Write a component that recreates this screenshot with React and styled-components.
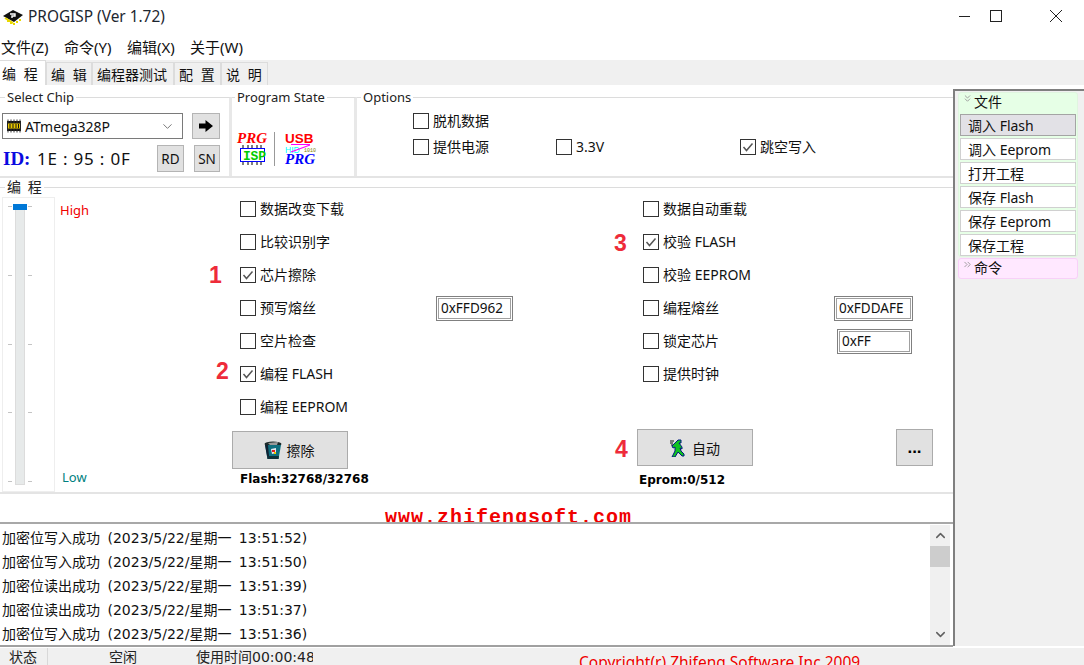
import React from "react";
import styled, { createGlobalStyle } from "styled-components";
import { ChevronDown, ChevronUp, ChevronsDown, ChevronsRight } from "lucide-react";

const Global = createGlobalStyle`
  html, body {
    margin: 0;
    padding: 0;
    background: #fff;
  }
  * {
    box-sizing: border-box;
  }
`;

const UI_FONT = `"Noto Sans", "Noto Sans CJK SC", sans-serif`;
const WIDE_FONT = `"DejaVu Sans", "Noto Sans CJK SC", sans-serif`;

function AppIcon() {
  return (
    <svg width="22" height="18" viewBox="0 0 22 18">
      <path d="M1 9 L11 3 L21 8 L12 15 Z" fill="#111" />
      <path d="M3 11 L11 16 M6 13 L6 15 M9 15 L9 17 M12 16 L12 18 M15 14 L15 16 M18 12 L18 14" stroke="#e8d800" strokeWidth="2" />
      <path d="M8 7 h5 v2 h-3 v2" stroke="#fff" strokeWidth="1.4" fill="none" />
    </svg>
  );
}

function WinControl({ kind }) {
  return (
    <svg width="14" height="14" viewBox="0 0 14 14" stroke="#222" strokeWidth="1" fill="none">
      {kind === "min" && <path d="M1 7.5 H12" />}
      {kind === "max" && <rect x="1.5" y="1.5" width="11" height="11" />}
      {kind === "close" && <path d="M1 1 L13 13 M13 1 L1 13" />}
    </svg>
  );
}

function ChipIcon() {
  return (
    <svg width="16" height="14" viewBox="0 0 16 14">
      <rect x="1" y="2" width="14" height="10" fill="#111" />
      <path d="M2 0.5 V13.5 M5 0.5 V13.5 M8 0.5 V13.5 M11 0.5 V13.5 M14 0.5 V13.5" stroke="#333" strokeWidth="1" />
      <rect x="2" y="4.5" width="12" height="5" fill="#e8c800" />
      <path d="M4 5 V9 M7 5 V9 M10 5 V9 M12.5 5 V9" stroke="#111" strokeWidth="1" />
    </svg>
  );
}

function ArrowIcon() {
  return (
    <svg width="14" height="12" viewBox="0 0 14 12">
      <path d="M0 3.5 H6.5 V0 L14 6 L6.5 12 V8.5 H0 Z" fill="#000" />
    </svg>
  );
}

function StateLogo() {
  return (
    <svg width="92" height="38" viewBox="0 0 92 38">
      <text x="3" y="12" fontFamily="Liberation Serif" fontWeight="700" fontStyle="italic" fontSize="15" fill="#f00">PRG</text>
      <path d="M9 14 V34 M14 14 V34 M18 14 V34 M23 14 V34 M27 14 V34" stroke="#000" strokeWidth="1" />
      <rect x="6.5" y="17.5" width="24" height="13" fill="#fff" stroke="#00f" strokeWidth="1" />
      <text x="9" y="29" fontFamily="Liberation Mono" fontWeight="700" fontSize="13" fill="#0c0" letterSpacing="-0.2">ISP</text>
      <path d="M40.5 1 V35" stroke="#999" strokeWidth="1" />
      <text x="51" y="12" fontFamily="Liberation Sans" fontWeight="700" fontSize="13.5" fill="#f00">USB</text>
      <text x="51" y="22" fontFamily="Liberation Sans" fontSize="8.5" fill="#0ff">HID</text>
      <path d="M57 21 L76 14 M57 13.5 H76" stroke="#f0f" strokeWidth="1.2" />
      <text x="70" y="21" fontFamily="Liberation Mono" fontSize="5" fill="#808000">1010</text>
      <text x="51" y="33" fontFamily="Liberation Serif" fontWeight="700" fontStyle="italic" fontSize="15" fill="#00f">PRG</text>
    </svg>
  );
}

function TrashIcon() {
  return (
    <svg width="20" height="20" viewBox="0 0 20 20">
      <ellipse cx="10" cy="4" rx="8.5" ry="2.6" fill="#1b2a2a" />
      <path d="M5 3 L15 2 L14 5 L7 5 Z" fill="#999" />
      <path d="M2 5 L18 5 L15.5 19 L4.5 19 Z" fill="#0f6f7f" />
      <path d="M4.5 19 L15.5 19 L16 16 L4 16 Z" fill="#10303a" />
      <path d="M2 5 L5 5 L6 16 L4 16 Z" fill="#123" />
      <path d="M8 9 L13 8 L13 13 L9 14 Z" fill="#e8e8f0" />
      <rect x="9" y="10" width="3" height="2" fill="#e02020" />
      <rect x="11" y="12" width="2" height="2" fill="#e8c800" />
    </svg>
  );
}

function RunnerIcon() {
  return (
    <svg width="17" height="19" viewBox="0 0 17 19">
      <path d="M0 3 H4 M0 5 H3 M1 7 H4" stroke="#111" strokeWidth="1" />
      <path d="M8 2 h3 v3 h-2 l3 4 v2 l-2 -1 l1 3 l3 3 v2 h-2 l-4 -4 l-3 5 h-3 l3 -6 v-4 l-2 1 l-1 -2 z" fill="#10c020" stroke="#001a80" strokeWidth="1" strokeLinejoin="round" />
    </svg>
  );
}

function CheckBox({ checked }) {
  return (
    <Box>
      {checked && (
        <svg width="14" height="14" viewBox="0 0 14 14">
          <path d="M2.5 7 L5.5 10.5 L11.5 3.5" stroke="#555" strokeWidth="1.5" fill="none" />
        </svg>
      )}
    </Box>
  );
}

function Check({ checked, label }) {
  return (
    <CheckLabel>
      <CheckBox checked={checked} />
      <span>{label}</span>
    </CheckLabel>
  );
}

const leftRows = [
  { label: "数据改变下载" },
  { label: "比较识别字" },
  { label: "芯片擦除", checked: true, mark: "1", left: -31, top: 0 },
  { label: "预写熔丝", fuse: "0xFFD962", $w: 196, fuseW: 77 },
  { label: "空片检查" },
  { label: "编程 FLASH", checked: true, mark: "2", left: -24, top: -3 },
  { label: "编程 EEPROM" },
];

const rightRows = [
  { label: "数据自动重载" },
  { label: "校验 FLASH", checked: true, mark: "3", left: -29, top: 1 },
  { label: "校验 EEPROM" },
  { label: "编程熔丝", fuse: "0xFDDAFE", $w: 191, fuseW: 79 },
  { label: "锁定芯片", fuse: "0xFF", $w: 194, fuseW: 75 },
  { label: "提供时钟" },
];

const logLines = [
  "加密位写入成功 (2023/5/22/星期一 13:51:52)",
  "加密位写入成功 (2023/5/22/星期一 13:51:50)",
  "加密位读出成功 (2023/5/22/星期一 13:51:39)",
  "加密位读出成功 (2023/5/22/星期一 13:51:37)",
  "加密位写入成功 (2023/5/22/星期一 13:51:36)",
];

const fileItems = ["调入 Flash", "调入 Eeprom", "打开工程", "保存 Flash", "保存 Eeprom", "保存工程"];
const tabs = [
  { text: "编 程", w: 46 },
  { text: "编 辑", w: 46 },
  { text: "编程器测试", w: 82 },
  { text: "配 置", w: 47 },
  { text: "说 明", w: 47 },
];
const menus = ["文件(Z)", "命令(Y)", "编辑(X)", "关于(W)"];

function OptionRows({ rows, indent }) {
  return rows.map((r) => (
    <CheckRow key={r.label} $w={r.$w} $indent={indent}>
      {r.mark && (
        <Mark $left={r.left} $top={r.top}>
          {r.mark}
        </Mark>
      )}
      <Check checked={r.checked} label={r.label} />
      {r.fuse && <Fuse $w={r.fuseW}>{r.fuse}</Fuse>}
    </CheckRow>
  ));
}

export default function App() {
  return (
    <Page>
      <Global />
      <TitleBar>
        <AppIcon />
        <Title>PROGISP (Ver 1.72)</Title>
        <Controls>
          <WinControl kind="min" />
          <WinControl kind="max" />
          <CloseSlot>
            <WinControl kind="close" />
          </CloseSlot>
        </Controls>
      </TitleBar>

      <MenuBar>
        {menus.map((m) => (
          <MenuItem key={m}>{m}</MenuItem>
        ))}
      </MenuBar>

      <TabStrip>
        {tabs.map((t, i) => (
          <Tab key={t.text} $w={t.w} $active={i === 0}>
            {t.text}
          </Tab>
        ))}
      </TabStrip>

      <Body>
        <Main>
          <TopRow>
            <ChipGroup>
              <Legend>Select Chip</Legend>
              <ChipLine>
                <ChipSelect>
                  <ChipIcon />
                  <ChipName>ATmega328P</ChipName>
                  <ChevronDown size={15} color="#666" strokeWidth={1.4} />
                </ChipSelect>
                <SmallButton $w={28} $h={26}>
                  <ArrowIcon />
                </SmallButton>
              </ChipLine>
              <IdLine>
                <IdTag>ID:</IdTag>
                <IdValue>1E : 95 : 0F</IdValue>
                <SmallButton $w={27} $h={27}>RD</SmallButton>
                <SmallButton $w={26} $h={27}>SN</SmallButton>
              </IdLine>
            </ChipGroup>

            <StateGroup>
              <Legend $x={3}>Program State</Legend>
              <LogoSlot>
                <StateLogo />
              </LogoSlot>
            </StateGroup>

            <OptionsGroup>
              <Legend $x={4}>Options</Legend>
              <OptionsGrid>
                <Check label="脱机数据" />
                <span />
                <span />
                <Check label="提供电源" />
                <Check label="3.3V" />
                <Check checked label="跳空写入" />
              </OptionsGrid>
            </OptionsGroup>
          </TopRow>

          <ProgramGroup>
            <ProgramLegend>编 程</ProgramLegend>
            <ProgramBody>
              <SliderBox>
                <Track>
                  <Thumb />
                </Track>
                <Ticks>
                  {[0, 1, 2, 3, 4].map((n) => (
                    <TickRow key={n}>
                      <Tick />
                      <Tick />
                    </TickRow>
                  ))}
                </Ticks>
              </SliderBox>

              <Levels>
                <High>High</High>
                <Low>Low</Low>
              </Levels>

              <LeftColumn>
                <OptionRows rows={leftRows} indent={8} />
                <EraseButton>
                  <TrashIcon />
                  擦除
                </EraseButton>
                <Counter>Flash:32768/32768</Counter>
              </LeftColumn>

              <RightColumn>
                <CheckArea>
                  <OptionRows rows={rightRows} indent={6} />
                </CheckArea>
                <ActionRow>
                  <AutoButton>
                    <AutoMark>4</AutoMark>
                    <RunnerIcon />
                    自动
                  </AutoButton>
                  <MoreButton>...</MoreButton>
                </ActionRow>
                <EpromCounter>Eprom:0/512</EpromCounter>
              </RightColumn>
            </ProgramBody>
          </ProgramGroup>

          <Banner>www.zhifengsoft.com</Banner>

          <LogPane>
            <LogList>
              {logLines.map((l, i) => (
                <LogLine key={i}>{l}</LogLine>
              ))}
            </LogList>
            <ScrollTrack>
              <ScrollEnd>
                <ChevronUp size={15} color="#606060" strokeWidth={2.4} />
              </ScrollEnd>
              <ScrollThumb />
              <ScrollFill />
              <ScrollEnd>
                <ChevronDown size={15} color="#606060" strokeWidth={2.4} />
              </ScrollEnd>
            </ScrollTrack>
          </LogPane>
        </Main>

        <Sidebar>
          <SideGroup $bg="#e6ffe6" $line="#e0f5e0">
            <SideHead>
              <ChevronsDown size={11} color="#999" strokeWidth={2} />
              文件
            </SideHead>
            {fileItems.map((f, i) => (
              <SideItem key={f} $selected={i === 0}>
                {f}
              </SideItem>
            ))}
          </SideGroup>
          <SideGroup $bg="#ffe8ff" $line="#f8d0f8">
            <SideHead>
              <ChevronsRight size={11} color="#999" strokeWidth={2} />
              命令
            </SideHead>
          </SideGroup>
        </Sidebar>
      </Body>

      <StatusBar>
        <StatusCell $w={48} $pad={9} $line>状态</StatusCell>
        <StatusCell $w={148} $pad={61}>空闲</StatusCell>
        <TimeCell $w={117} $pad={0}>使用时间00:00:48</TimeCell>
        <Copyright>Copyright(r) Zhifeng Software Inc 2009</Copyright>
      </StatusBar>
    </Page>
  );
}

const Page = styled.div`
  width: 1084px;
  height: 665px;
  overflow: hidden;
  display: flex;
  flex-direction: column;
  background: #fff;
  color: #111;
  font-family: ${UI_FONT};
  font-size: 14px;
`;

const TitleBar = styled.div`
  height: 32px;
  flex: none;
  display: flex;
  align-items: center;
  padding-left: 2px;
`;

const Title = styled.div`
  margin-left: 4px;
  font-size: 15.4px;
  color: #1c2630;
`;

const Controls = styled.div`
  margin-left: auto;
  margin-right: 21px;
  display: flex;
  align-items: center;
  gap: 17px;
`;

const CloseSlot = styled.div`
  margin-left: 29px;
  display: flex;
`;

const MenuBar = styled.div`
  height: 28px;
  flex: none;
  display: flex;
  align-items: center;
  padding-left: 1px;
  gap: 14px;
`;

const MenuItem = styled.div`
  width: 49px;
  white-space: nowrap;
  font-size: 15px;
`;

const TabStrip = styled.div`
  height: 25px;
  flex: none;
  display: flex;
  align-items: flex-end;
  background: #f0f0f0;
`;

const Tab = styled.div`
  width: ${(p) => p.$w}px;
  height: ${(p) => (p.$active ? 25 : 23)}px;
  padding-left: ${(p) => (p.$active ? 2 : 4)}px;
  display: flex;
  align-items: center;
  font-size: 14px;
  word-spacing: 4px;
  white-space: nowrap;
  background: ${(p) => (p.$active ? "#fff" : "#f0f0f0")};
  border: 1px solid #dcdcdc;
  border-bottom: none;
  border-left: ${(p) => (p.$active ? "none" : "1px solid #dcdcdc")};
`;

const Body = styled.div`
  height: 562px;
  flex: none;
  display: flex;
`;

const Main = styled.div`
  width: 953px;
  flex: none;
  display: flex;
  flex-direction: column;
  border-bottom: 2px solid #a0a0a0;
  padding-top: 3px;
`;

const Group = styled.fieldset`
  margin: 0;
  padding: 0;
  min-width: 0;
  border: none;
  border-top: 1px solid #dcdcdc;
`;

const Legend = styled.legend`
  margin-left: ${(p) => p.$x ?? 5}px;
  padding: 0 2px;
  height: 18px;
  line-height: 18px;
  font-size: 13px;
  color: #222;
`;

const ProgramLegend = styled(Legend)`
  font-size: 14px;
  word-spacing: 3px;
`;

const TopRow = styled.div`
  height: 90px;
  flex: none;
  display: flex;
  border-bottom: 2px solid #e4e4e4;
`;

const ChipGroup = styled(Group)`
  width: 232px;
  flex: none;
  border-right: 3px solid #e8e8e8;
`;

const ChipLine = styled.div`
  margin-top: 7px;
  padding-left: 2px;
  display: flex;
  gap: 9px;
  align-items: center;
`;

const ChipSelect = styled.div`
  width: 181px;
  height: 26px;
  border: 1px solid #7a7a7a;
  display: flex;
  align-items: center;
  gap: 3px;
  padding: 0 7px 0 3px;
  background: #fff;
`;

const ChipName = styled.span`
  flex: 1;
  font-size: 14px;
`;

const SmallButton = styled.div`
  width: ${(p) => p.$w}px;
  height: ${(p) => p.$h}px;
  flex: none;
  border: 1px solid #b4b4b4;
  background: #e1e1e1;
  display: flex;
  align-items: center;
  justify-content: center;
  font-size: 13.5px;
  color: #111;
`;

const IdLine = styled.div`
  margin-top: 6px;
  padding-left: 3px;
  display: flex;
  align-items: center;
  gap: 10px;
`;

const IdTag = styled.span`
  width: 24px;
  font-family: "Liberation Serif", serif;
  font-weight: 700;
  font-size: 19px;
  white-space: nowrap;
  color: #0a0ae0;
`;

const IdValue = styled.span`
  width: 110px;
  font-size: 17px;
  letter-spacing: 0.8px;
  white-space: nowrap;
  color: #111;
`;

const StateGroup = styled(Group)`
  width: 125px;
  flex: none;
  border-right: 3px solid #e8e8e8;
`;

const LogoSlot = styled.div`
  padding: 25px 0 0 2px;
  display: flex;
`;

const OptionsGroup = styled(Group)`
  flex: 1;
`;

const OptionsGrid = styled.div`
  margin: 2px 0 0 56px;
  display: grid;
  grid-template-columns: 143px 184px auto;
  grid-auto-rows: 26px;
  align-items: center;
`;

const CheckLabel = styled.label`
  display: flex;
  align-items: center;
  gap: 4px;
  font-size: 14px;
  white-space: nowrap;
  color: #111;
  span + span {
    margin-top: -2px;
  }
`;

const Box = styled.span`
  width: 16px;
  height: 16px;
  flex: none;
  border: 1px solid #333;
  background: #fff;
  display: flex;
  align-items: center;
  justify-content: center;
`;

const ProgramGroup = styled(Group)`
  height: 316px;
  flex: none;
  border-bottom: 2px solid #e4e4e4;
`;

const ProgramBody = styled.div`
  display: flex;
`;

const SliderBox = styled.div`
  width: 53px;
  height: 295px;
  flex: none;
  margin: 1px 0 0 2px;
  border: 1px solid #eeeeee;
  position: relative;
  padding: 6px 0 0 12px;
`;

const Track = styled.div`
  width: 10px;
  height: 281px;
  background: #e7eaea;
  border: 1px solid #dcdcdc;
  position: relative;
`;

const Thumb = styled.div`
  position: absolute;
  top: -1px;
  left: -3px;
  width: 14px;
  height: 6px;
  background: #0078d7;
`;

const Ticks = styled.div`
  position: absolute;
  top: 8px;
  left: 5px;
  width: 24px;
  height: 276px;
  display: flex;
  flex-direction: column;
  justify-content: space-between;
`;

const TickRow = styled.div`
  display: flex;
  justify-content: space-between;
`;

const Tick = styled.span`
  width: 4px;
  height: 1px;
  background: #c4c4c4;
`;

const Levels = styled.div`
  width: 177px;
  flex: none;
  height: 290px;
  padding: 5px 0 0 5px;
  display: flex;
  flex-direction: column;
  justify-content: space-between;
  font-size: 13px;
`;

const High = styled.div`
  color: #f00000;
`;

const Low = styled.div`
  margin-left: 2px;
  color: #008080;
`;

const LeftColumn = styled.div`
  width: 405px;
  flex: none;
  display: flex;
  flex-direction: column;
`;

const RightColumn = styled.div`
  flex: 1;
  display: flex;
  flex-direction: column;
`;

const CheckArea = styled.div`
  height: 233px;
`;

const CheckRow = styled.div`
  position: relative;
  height: 26px;
  margin: 0 0 7px ${(p) => p.$indent}px;
  display: ${(p) => (p.$w ? "grid" : "flex")};
  grid-template-columns: ${(p) => p.$w}px auto;
  align-items: center;
  justify-content: start;
`;

const Mark = styled.span`
  position: absolute;
  left: ${(p) => p.$left}px;
  top: ${(p) => p.$top}px;
  font-family: "Liberation Sans", sans-serif;
  font-weight: 700;
  font-size: 23px;
  line-height: 26px;
  color: #ee2b3a;
`;

const Fuse = styled.div`
  width: ${(p) => p.$w}px;
  height: 25px;
  border: 1px solid #808080;
  box-shadow: inset 0 0 0 1px #fff, inset 0 0 0 2px #a0a0a0;
  display: flex;
  align-items: center;
  padding-left: 4px;
  font-size: 13.5px;
`;

const BigButton = styled.div`
  width: 116px;
  flex: none;
  border: 1px solid #ababab;
  background: #e1e1e1;
  display: flex;
  align-items: center;
  justify-content: center;
  gap: 4px;
  font-size: 14px;
`;

const EraseButton = styled(BigButton)`
  height: 38px;
  margin-top: 4px;
  padding-right: 3px;
`;

const Counter = styled.div`
  margin: 3px 0 0 8px;
  font-family: "DejaVu Sans", sans-serif;
  font-weight: 700;
  font-size: 12px;
  color: #000;
`;

const ActionRow = styled.div`
  display: flex;
  justify-content: space-between;
  padding-right: 20px;
`;

const AutoButton = styled(BigButton)`
  height: 37px;
  position: relative;
  gap: 5px;
`;

const AutoMark = styled.span`
  position: absolute;
  left: -23px;
  top: 6px;
  font-family: "Liberation Sans", sans-serif;
  font-weight: 700;
  font-size: 23px;
  line-height: 26px;
  color: #ee2b3a;
`;

const MoreButton = styled.div`
  width: 37px;
  height: 37px;
  border: 1px solid #ababab;
  background: #e1e1e1;
  display: flex;
  align-items: center;
  justify-content: center;
  font-family: "Liberation Sans", sans-serif;
  font-weight: 700;
  font-size: 17px;
  color: #000;
`;

const EpromCounter = styled(Counter)`
  margin: 7px 0 0 2px;
`;

const Banner = styled.div`
  height: 30px;
  flex: none;
  overflow: hidden;
  padding-left: 385px;
  font-family: "Liberation Mono", monospace;
  font-weight: 700;
  font-size: 20px;
  letter-spacing: 1px;
  line-height: 47px;
  color: #f00000;
  border-bottom: 2px solid #a8a8a8;
`;

const LogPane = styled.div`
  flex: 1;
  min-height: 0;
  display: flex;
  padding: 1px 3px 0 0;
`;

const LogList = styled.div`
  flex: 1;
  padding: 1px 0 0 2px;
`;

const LogLine = styled.div`
  height: 24px;
  line-height: 24px;
  font-family: ${WIDE_FONT};
  font-size: 14px;
  word-spacing: 3px;
  white-space: nowrap;
  color: #111;
`;

const ScrollTrack = styled.div`
  width: 20px;
  background: #f0f0f0;
  display: flex;
  flex-direction: column;
`;

const ScrollEnd = styled.div`
  height: 21px;
  flex: none;
  display: flex;
  align-items: center;
  justify-content: center;
`;

const ScrollThumb = styled.div`
  height: 21px;
  flex: none;
  background: #cdcdcd;
`;

const ScrollFill = styled.div`
  flex: 1;
`;

const Sidebar = styled.div`
  flex: 1;
  margin-top: 4px;
  height: 557px;
  background: #f0f0f0;
  border-left: 2px solid #7f7f7f;
  border-top: 2px solid #7f7f7f;
  padding: 1px 6px 0 3px;
  display: flex;
  flex-direction: column;
  gap: 1px;
`;

const SideGroup = styled.div`
  background: ${(p) => p.$bg};
  border: 1px solid ${(p) => p.$line};
  border-radius: 3px;
  padding: 0 1px;
  display: flex;
  flex-direction: column;
  gap: 2px;
`;

const SideHead = styled.div`
  height: 19px;
  display: flex;
  align-items: center;
  gap: 1px;
  padding: 0 0 4px 2px;
  font-size: 14px;
  color: #111;
  svg {
    margin-top: -4px;
  }
`;

const SideItem = styled.div`
  height: 22px;
  display: flex;
  align-items: center;
  padding: 0 0 1px 7px;
  font-size: 14px;
  white-space: pre;
  color: #111;
  background: ${(p) => (p.$selected ? "#e2e1e6" : "#fff")};
  border: 1px solid ${(p) => (p.$selected ? "#a4a4a4" : "#d0d0d0")};
`;

const StatusBar = styled.div`
  flex: 1;
  display: flex;
  align-items: flex-start;
  background: #f0f0f0;
  margin-top: 1px;
  overflow: hidden;
`;

const StatusCell = styled.div`
  width: ${(p) => p.$w}px;
  height: 100%;
  flex: none;
  overflow: hidden;
  padding-left: ${(p) => p.$pad}px;
  font-size: 14px;
  line-height: 18px;
  white-space: nowrap;
  color: #222;
  border-right: ${(p) => (p.$line ? "1px solid #d8d8d8" : "none")};
`;

const TimeCell = styled(StatusCell)`
  font-family: ${WIDE_FONT};
`;

const Copyright = styled.div`
  margin: 5px 0 0 266px;
  font-size: 15.5px;
  line-height: 18px;
  white-space: nowrap;
  color: #f00000;
`;
